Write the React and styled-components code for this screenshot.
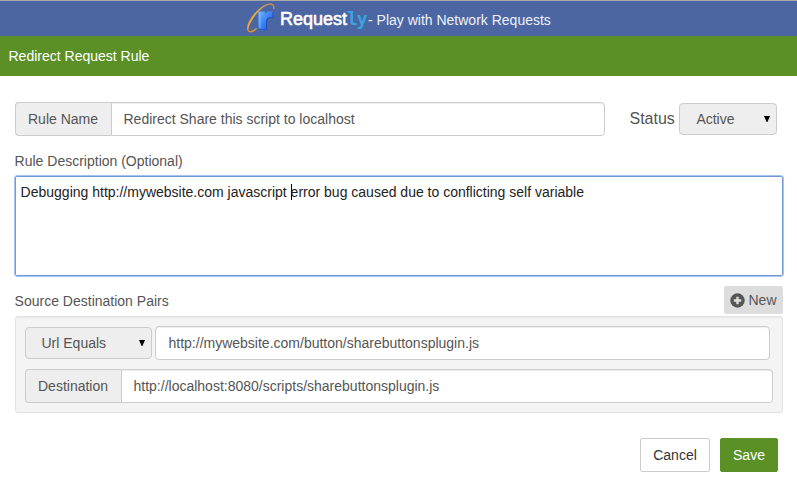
import React from "react";
import styled, { createGlobalStyle } from "styled-components";

const GlobalStyle = createGlobalStyle`
  *, *::before, *::after { box-sizing: border-box; }
  body {
    margin: 0;
    background: #fff;
    color: #555;
    font: 14px/20px "Liberation Sans", Arial, sans-serif;
  }
`;

const Page = styled.div`
  height: 491px;
  overflow: hidden;
`;

const Banner = styled.header`
  display: flex;
  align-items: flex-start;
  height: 36px;
  padding-left: 246px;
  border-top: 1px solid #a9a9a9;
  background: #4c66a4;
  color: #eef1f8;
  white-space: nowrap;
`;

const LogoMark = styled.svg`
  flex: none;
  width: 30px;
  height: 32px;
  margin-top: 1px;
`;

const Brand = styled.span`
  width: 67px;
  margin: 8px 0 0 4px;
  color: #fff;
  font-size: 18px;
  -webkit-text-stroke: 0.6px #fff;
`;

const BrandAccent = styled.span`
  width: 21px;
  margin-top: 8px;
  color: #38a5e0;
  font: bold 18px/20px "DejaVu Sans Mono", monospace;
  letter-spacing: -1px;
`;

const Tagline = styled.span`
  margin-top: 9px;
`;

const TitleBar = styled.div`
  height: 40px;
  padding: 10px 8.5px;
  background: #5b9027;
  color: #fff;
`;

const Form = styled.main`
  padding: 26px 14px 0 15px;
`;

const RuleRow = styled.div`
  display: flex;
  align-items: center;
  height: 34px;
`;

const InputGroup = styled.label`
  display: flex;
  width: ${(p) => p.$width}px;
  height: 34px;
`;

const Addon = styled.span`
  flex: none;
  width: ${(p) => p.$width}px;
  padding: 6px 12px;
  border: 1px solid #ccc;
  border-right: 0;
  border-radius: 4px 0 0 4px;
  background: #eee;
  white-space: nowrap;
`;

const Input = styled.input`
  flex: 1;
  min-width: 0;
  height: 34px;
  margin: 0;
  padding: 6px ${(p) => (p.$joined ? 11.5 : 12.5)}px;
  border: 1px solid #ccc;
  border-radius: ${(p) => (p.$joined ? "0 4px 4px 0" : "4px")};
  outline: 0;
  background: #fff;
  box-shadow: inset 0 1px 1px rgba(0, 0, 0, 0.075);
  color: #555;
  font: inherit;
`;

const StatusLabel = styled.span`
  width: 50px;
  margin-left: 24px;
  padding-left: 0.5px;
  font-size: 16px;
`;

const SelectButton = styled.button`
  display: flex;
  flex: none;
  align-items: center;
  justify-content: space-between;
  width: ${(p) => p.$width}px;
  height: 32px;
  margin: 0;
  padding: 0 6px 0 ${(p) => p.$inset}px;
  border: 1px solid #ccc;
  border-radius: 4px;
  background: #eee;
  color: #555;
  font: inherit;
`;

const Arrow = styled.svg`
  width: 6px;
  height: 6px;
`;

const DescriptionLabel = styled.div`
  height: 20px;
  margin: 15px 0 0 -0.4px;
`;

const PairsLabel = styled.div`
  height: 20px;
  margin: 2px 0 0 -0.4px;
`;

const Description = styled.div`
  height: 102px;
  margin: 4px -1px 0;
  padding: 6px 5.6px;
  border: 1px solid #a9c4f0;
  border-radius: 3px;
  box-shadow: inset 0 0 0 1px #7398da;
  color: #222;
`;

const Caret = styled.span`
  display: inline-block;
  width: 1px;
  height: 16px;
  margin-right: -1px;
  background: #000;
  vertical-align: -3px;
`;

const PairsHeader = styled.div`
  display: flex;
  justify-content: space-between;
  align-items: center;
  height: 28px;
  margin-top: 9px;
`;

const NewButton = styled.button`
  display: flex;
  align-items: center;
  gap: 3.5px;
  width: 59px;
  height: 28px;
  padding: 0 6px;
  border: 0;
  border-radius: 2px;
  background: #ddd;
  color: #555;
  font: inherit;
`;

const PlusIcon = styled.svg`
  flex: none;
  width: 15px;
  height: 15px;
`;

const Pairs = styled.section`
  display: flex;
  flex-direction: column;
  gap: 9px;
  height: 97px;
  margin-top: 2px;
  padding: 9px;
  border: 1px solid #e3e3e3;
  border-radius: 3px;
  background: #f4f4f4;
  box-shadow: inset 0 1px 1px rgba(0, 0, 0, 0.05);
`;

const SourceRow = styled.div`
  display: flex;
  align-items: center;
  gap: 3px;
  width: 745px;
`;

const Actions = styled.footer`
  display: flex;
  justify-content: flex-end;
  gap: 10px;
  margin-top: 25px;
  padding-right: 5px;
`;

const ActionButton = styled.button`
  width: ${(p) => (p.$primary ? 58 : 70)}px;
  height: 34px;
  padding: 0;
  border: 1px solid ${(p) => (p.$primary ? "#5b9027" : "#ccc")};
  border-radius: 2px;
  background: ${(p) => (p.$primary ? "#5b9027" : "#fff")};
  color: ${(p) => (p.$primary ? "#fff" : "#333")};
  font: inherit;
`;

function Logo() {
  return (
    <LogoMark viewBox="0 0 30 32" aria-hidden="true">
      <defs>
        <linearGradient id="letter" x1="0" y1="0" x2="1" y2="1">
          <stop offset="0" stopColor="#76b7ff" />
          <stop offset="0.5" stopColor="#3b83f5" />
          <stop offset="1" stopColor="#1f5be0" />
        </linearGradient>
        <linearGradient id="ring" x1="0" y1="1" x2="1" y2="0">
          <stop offset="0" stopColor="#d98a2b" />
          <stop offset="0.5" stopColor="#f3b53f" />
          <stop offset="1" stopColor="#b48a60" />
        </linearGradient>
      </defs>
      <path
        d="M27.5 7C29.5 1.6 23.5 0 16 5.5C6.5 12.5-.8 25 2.5 29C4 30.8 7 29.5 10.5 26.5"
        fill="none"
        stroke="url(#ring)"
        strokeWidth="1.5"
      />
      <path d="M17 4.6C8 10.5-.3 23.5 2 28.6C3 22 9 12 17 4.6Z" fill="#f5ae34" />
      <path
        d="M13.1 10.3h6v2.2c1.8-2.4 4.5-3.1 8.1-2.3v6c-4.7-.6-6.1.8-6.1 4.2v7.4h-8Z"
        fill="#1c47b4"
      />
      <path
        d="M12.3 9.6h6.5v2.3c1.8-2.4 4.5-3.1 7.7-2.3v5.7c-4.7-.6-6.3.8-6.3 4.5v7.5h-7.9Z"
        fill="url(#letter)"
      />
      <path d="M14 10.5v15.5" stroke="#80bcff" strokeWidth="1" />
    </LogoMark>
  );
}

function Select({ width, inset, children }) {
  return (
    <SelectButton type="button" $width={width} $inset={inset}>
      {children}
      <Arrow viewBox="0 0 6 6" aria-hidden="true">
        <path d="M0 0H6L3.4 6H2.6Z" fill="#000" />
      </Arrow>
    </SelectButton>
  );
}

export default function App() {
  return (
    <Page>
      <GlobalStyle />
      <Banner>
        <Logo />
        <Brand>Request</Brand>
        <BrandAccent>ly</BrandAccent>
        <Tagline>- Play with Network Requests</Tagline>
      </Banner>
      <TitleBar>Redirect Request Rule</TitleBar>
      <Form>
        <RuleRow>
          <InputGroup $width={590}>
            <Addon $width={96}>Rule Name</Addon>
            <Input $joined defaultValue="Redirect Share this script to localhost" />
          </InputGroup>
          <StatusLabel>Status</StatusLabel>
          <Select width={98} inset={16.4}>Active</Select>
        </RuleRow>
        <DescriptionLabel>Rule Description (Optional)</DescriptionLabel>
        <Description role="textbox" aria-multiline="true">
          Debugging http://mywebsite.com javascript <Caret />
          error bug caused due to conflicting self variable
        </Description>
        <PairsHeader>
          <PairsLabel>Source Destination Pairs</PairsLabel>
          <NewButton type="button">
            <PlusIcon viewBox="0 0 15 15" aria-hidden="true">
              <circle cx="7.5" cy="7.5" r="7.2" fill="#555" />
              <path d="M7.5 3.8v7.4M3.8 7.5h7.4" stroke="#ddd" strokeWidth="2.4" />
            </PlusIcon>
            New
          </NewButton>
        </PairsHeader>
        <Pairs>
          <SourceRow>
            <Select width={127} inset={15.5}>Url Equals</Select>
            <Input defaultValue="http://mywebsite.com/button/sharebuttonsplugin.js" />
          </SourceRow>
          <InputGroup $width={748}>
            <Addon $width={96}>Destination</Addon>
            <Input $joined defaultValue="http://localhost:8080/scripts/sharebuttonsplugin.js" />
          </InputGroup>
        </Pairs>
        <Actions>
          <ActionButton type="button">Cancel</ActionButton>
          <ActionButton type="button" $primary>
            Save
          </ActionButton>
        </Actions>
      </Form>
    </Page>
  );
}
